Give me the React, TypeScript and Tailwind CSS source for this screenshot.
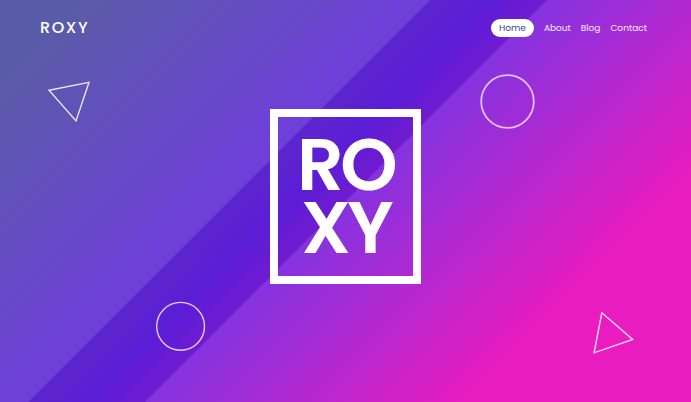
const links = ["About", "Blog", "Contact"];

function Shapes() {
  return (
    <div aria-hidden="true" className="pointer-events-none absolute inset-0 text-white">
      <svg className="absolute top-[80px] left-[47px] h-11 w-11" viewBox="0 0 44 44" fill="none" stroke="currentColor" strokeWidth="1.4" strokeOpacity="0.85">
        <path d="M2 10.3 42 2.3 29 41Z" />
      </svg>
      <svg className="absolute top-[74px] right-[156px] h-[55px] w-[55px]" viewBox="0 0 55 55" fill="none" stroke="currentColor" strokeWidth="1.8" strokeOpacity="0.7">
        <circle cx="27.5" cy="27.5" r="26.3" />
      </svg>
      <svg className="absolute bottom-[51px] left-[156px] h-[50px] w-[50px]" viewBox="0 0 50 50" fill="none" stroke="currentColor" strokeWidth="1.4" strokeOpacity="0.8">
        <circle cx="24.6" cy="25.3" r="23.9" />
      </svg>
      <svg className="absolute right-[56px] bottom-[48px] h-11 w-11" viewBox="0 0 44 44" fill="none" stroke="currentColor" strokeWidth="1.4" strokeOpacity="0.85">
        <path d="M10.8 2.8 41.7 29.4 3.1 42.8Z" />
      </svg>
    </div>
  );
}

export default function App() {
  return (
    <div className="relative min-h-screen overflow-hidden bg-[linear-gradient(135deg,#5a5ba8_8%,#6f3edb_39.3%,#5d26cc_39.4%,#5b1dd6_45%,#711bd0_50%,#8433df_50.1%,#e91cbf_79.5%)] font-[Poppins,sans-serif] text-white">
      <Shapes />
      <header className="relative flex h-14 items-center justify-between pr-11 pl-10">
        <a href="#home" className="text-base font-medium tracking-widest">ROXY</a>
        <nav aria-label="Main" className="flex items-center gap-2.5 text-[9px]">
          <a href="#home" aria-current="page" className="rounded-full bg-white px-2 leading-[18px] text-[#43449c]">Home</a>
          {links.map((link) => (
            <a key={link} href={"#" + link.toLowerCase()} className="leading-[18px] text-white/90">{link}</a>
          ))}
        </nav>
      </header>
      <main className="relative flex justify-center pt-[53px] pb-10">
        <h1 className="border-8 border-white px-[19px] pt-4 pb-[17px] text-center text-[73px] leading-[63px] font-semibold tracking-tighter">
          RO
          <br />
          XY
        </h1>
      </main>
    </div>
  );
}
